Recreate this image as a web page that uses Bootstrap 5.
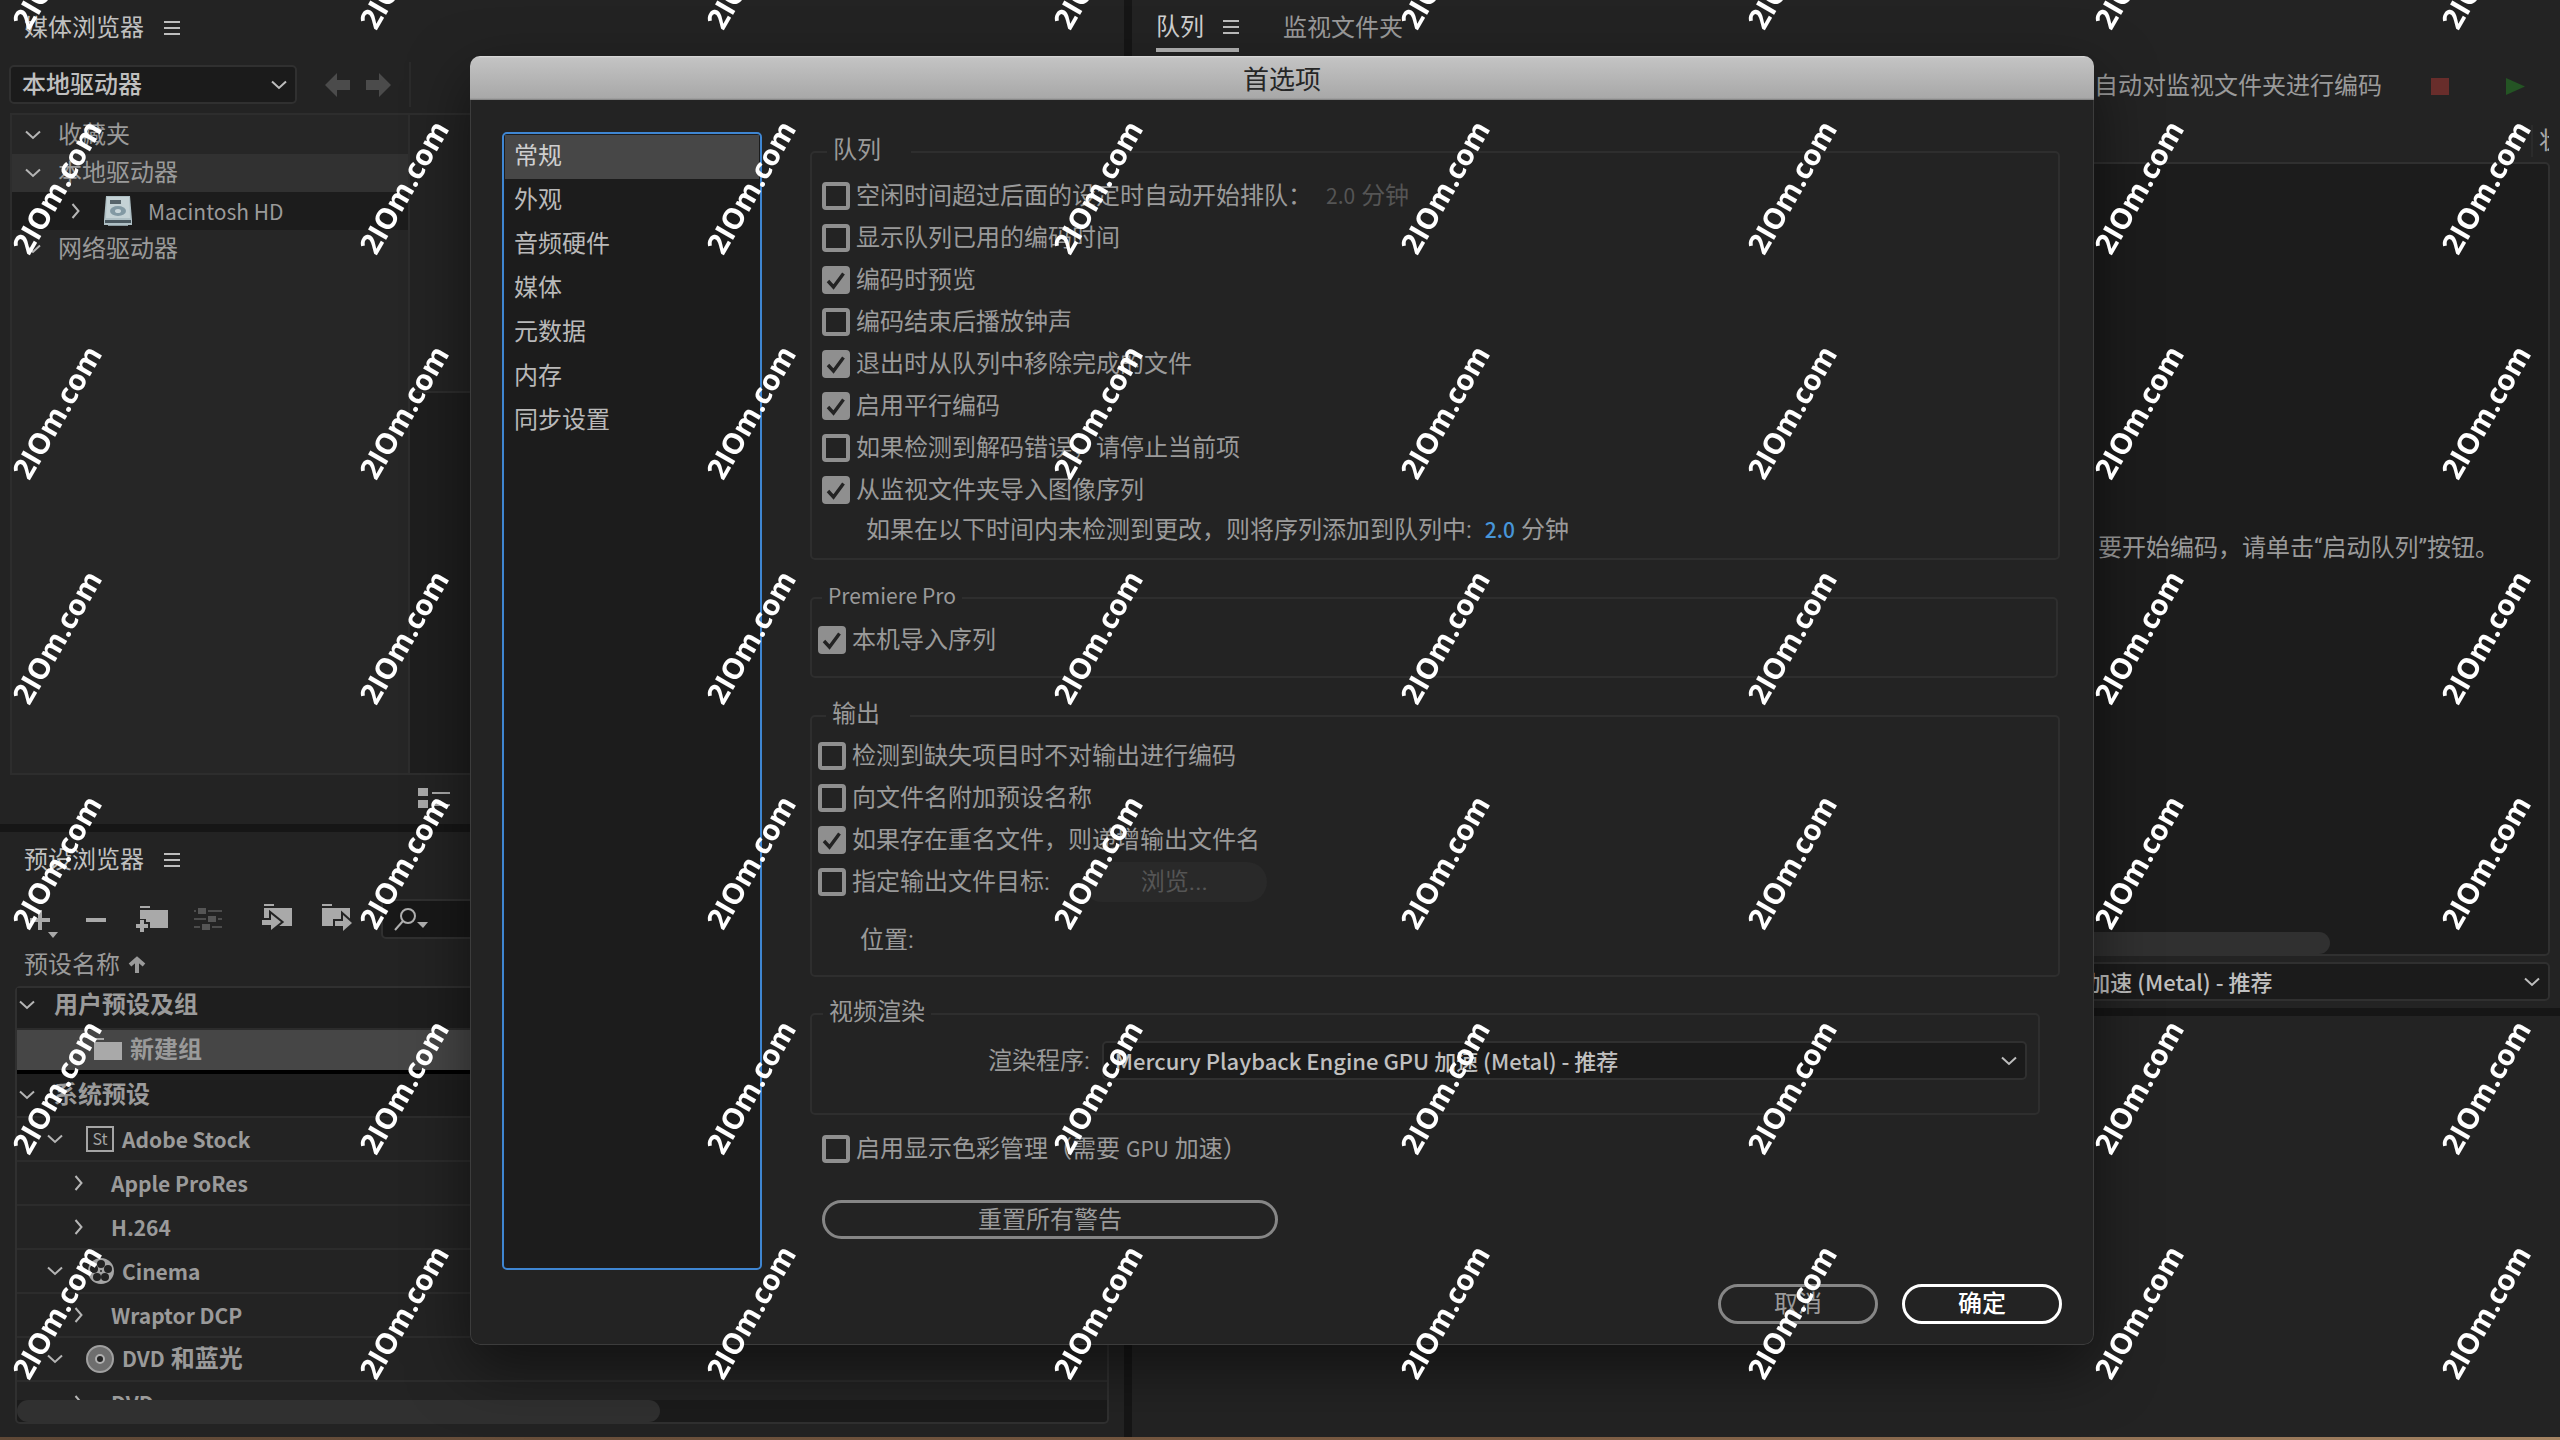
<!DOCTYPE html>
<html lang="zh-CN" data-bs-theme="dark">
<head>
<meta charset="utf-8">
<meta name="viewport" content="width=device-width, initial-scale=1">
<title>首选项</title>
<link rel="stylesheet" href="https://cdn.jsdelivr.net/npm/bootstrap@5.3.0/dist/css/bootstrap.min.css">
<style>
:root{--bg:#232323;--well:#1c1c1c;--line:#303030;--gap:#161616;--dim:#9a9a9a;--lit:#c0c0c0}
body{font:24px/32px Roboto,"Noto Sans CJK SC",sans-serif;background:linear-gradient(90deg,#5f4836,#7c5c43 60%,#a58463);color:var(--dim);height:100vh;overflow:hidden}
svg{display:block;flex:none}
.la{font-family:"Noto Sans CJK SC",sans-serif;font-size:21px;line-height:30px}
.workspace{display:grid;grid-template-columns:1124fr 1428fr;column-gap:8px;background:var(--gap);height:calc(100vh - 3px)}
.stack-col{display:grid;row-gap:8px;min-height:0;min-width:0}
.left-col{grid-template-rows:824fr 605fr}
.right-col{grid-template-rows:1008fr 421fr}
.pane{background:var(--bg);min-height:0;min-width:0;display:flex;flex-direction:column}
.pane-head{height:56px;padding:0 24px;display:flex;align-items:center;color:var(--lit);flex:none}
.plain{background:none;border:0;padding:0;color:inherit;font:inherit;line-height:32px}
.dark-select{font:inherit;font-weight:500;line-height:32px;color:var(--lit);background-color:#1b1b1b;border:2px solid var(--line);border-radius:5px;padding:1px 44px 1px 11px;height:39px;
 background-image:url("data:image/svg+xml,%3Csvg xmlns='http://www.w3.org/2000/svg' viewBox='0 0 16 10'%3E%3Cpath fill='none' stroke='%23bdbdbd' stroke-width='2' d='M1 1.5l7 6.5 7-6.5'/%3E%3C/svg%3E");background-size:16px 10px;background-position:right 8px center}
.engine-select{font-family:"Noto Sans CJK SC",sans-serif;font-size:22px;padding-top:0;padding-bottom:2px}
.drive-bar{height:57px;padding:6px 0 6px 9px}
.drive-bar .dark-select{width:288px}
.nav-arrows{width:114px;gap:16px;padding-right:18px;color:#4b4b4b;border-right:2px solid #2b2b2b;height:45px}
.drive-area{display:grid;grid-template-columns:398px 1fr;margin-left:10px;border:2px solid #2d2d2d;height:662px}
.drive-list{background:#262626;border-right:2px solid #2d2d2d}
.drive-list li{height:38px;padding-left:13px;display:flex;align-items:center}
.drive-list li:first-child{height:39px}
.drive-list svg.tw{margin-right:17px}
.drive-list .on{background:#313131}
.drive-list .kid{background:var(--well);padding-left:56px}
.drive-files{background:linear-gradient(#232323 276px,#2d2d2d 276px,#2d2d2d 278px,#1e1e1e 278px)}
.view-bar{padding:13px 0 0 418px}
.tool-row{height:40px;margin-top:11px;padding-left:29px;color:#a9a9a9}
.find-box{flex:1;margin-right:15px;height:40px;background:#181818;border:2px solid var(--line);border-radius:5px;position:relative}
.find-box input{background:none;border:0;width:100%;height:100%;padding-left:50px;color:var(--lit)}
.find-box svg{position:absolute;left:10px;top:6px}
.with-edge{stroke:var(--bg);stroke-width:4px;paint-order:stroke}
.sort-row{height:47px;padding:4px 24px 0}
.preset-box{flex:1;min-height:0;margin:0 15px 13px;border:2px solid var(--line);border-radius:5px;background:#1b1b1b;display:flex;flex-direction:column}
.preset-rows{flex:1;min-height:0;overflow:hidden;margin-right:24px;font-weight:600}
.preset-rows li{height:44px;border-bottom:2px solid #2c2c2c;background:var(--bg);display:flex;align-items:center;padding:0 0 1px 30px}
.preset-rows .root{padding-left:2px;background:#1e1e1e}
.preset-rows .first{height:42px;padding-bottom:6px}
.preset-rows .picked{background:#464646;border-bottom:4px solid #000;padding-left:77px}
.preset-rows .deep{padding-left:54px}
.preset-rows .deep svg{margin-right:24px}
.root>svg{margin-right:19px}
.branch>svg.tw{margin-right:23px}
.branch>svg+svg,.picked>svg{margin-right:8px}
.bar-track{height:22px;flex:none}
.bar-thumb{height:22px;border-radius:11px;background:#303030}
.active-tab{color:#d0d0d0;height:52px;border-bottom:4px solid #b5b5b5;padding-top:5px;display:flex;align-items:center;gap:19px;align-self:flex-start}
.other-tab{color:var(--dim);margin-left:44px}
.queue-bar{height:60px;padding-right:35px}
.queue-head{height:46px;padding-right:11px;padding-top:4px}
.clip-cell{width:18px;height:32px;overflow:hidden;border-left:2px solid #2b2b2b;padding-left:6px;color:#aaa}
.queue-well{background:var(--well);border:2px solid var(--line);border-radius:5px;margin:0 10px 0 8px;height:794px;display:flex;flex-direction:column}
.hint-line{margin-top:368px;padding-right:49px}
.render-bar{padding:6px 10px 0 0}
.render-bar .dark-select{width:56%}
.prefs{position:absolute;top:56px;left:18.36%;width:63.44%;background:var(--bg);border-radius:10px;box-shadow:0 22px 60px rgba(0,0,0,.5);overflow:hidden}
.prefs-shade{border:1px solid #3c3c3c;border-top:0;border-radius:0 0 10px 10px;padding:32px 31px 20px}
.prefs-title{height:44px;background:linear-gradient(#dcdcdc,#c3c3c3 2px,#a8a8a8 42px,#7d7d7d);color:#262626;font-size:26px;line-height:48px;font-weight:400;text-align:center;margin:0}
.page-list{width:260px;min-height:1138px;border:2px solid #3f86d2;border-radius:5px;background:var(--well);padding:1px;flex:none}
.page-list a{display:block;height:44px;padding:5px 9px;color:#b9b9b9;text-decoration:none}
.page-list a.on{background:#474747;color:#cfcfcf}
.page-body{margin:0 2px 0 48px;padding-top:2px}
.box{border:2px solid #2e2e2e;border-radius:5px;padding:5px 10px 5px}
.box legend{float:none;width:auto;font:inherit;line-height:32px;padding:0 6px 4px;margin:0}
.box .wide-legend{padding:0 30px 4px 6px;margin-left:5px}
.opt{height:42px;display:flex;align-items:center}
.opt .form-check-input{width:28px;height:28px;margin:0 6px 0 0;border:4px solid #8f8f8f;border-radius:4px;background-color:transparent;flex:none}
.opt .form-check-input:checked{background-color:#8f8f8f;background-origin:border-box;background-size:28px 28px;background-image:url("data:image/svg+xml,%3Csvg xmlns='http://www.w3.org/2000/svg' viewBox='0 0 28 28'%3E%3Cpath fill='none' stroke='%23232323' stroke-width='3.4' d='M6 15l5.5 6L21.5 7.500'/%3E%3C/svg%3E")}
.idle-time{color:#555;margin-left:14px}
.num-link{color:#4795d8;text-decoration:none;font-weight:500;margin:0 6px 0 13px}
.pill{font:inherit;line-height:32px;height:40px;border:3px solid #868686;border-radius:20px;background:transparent;color:var(--dim);padding:0;width:160px}
.pill-main{border-color:#fff;color:#fff;font-weight:500}
.pill-reset{width:456px;height:39px;margin:30px 0 0 12px}
.pill-off{border:0;background:#292929;width:185px;color:#555;margin-left:32px}
.stamp-layer{position:fixed;inset:0;overflow:hidden;pointer-events:none;z-index:5}
.stamp-grid{display:grid;grid-template-columns:repeat(8,347px);grid-auto-rows:225px;place-items:center;margin:-151px 0 0 -117px;width:max-content;color:#fff;font:700 29px/32px "Open Sans",sans-serif}
.stamp-grid span{transform:rotate(-60deg)}
</style>
<script src="https://cdn.jsdelivr.net/npm/bootstrap@5.3.0/dist/js/bootstrap.bundle.min.js"></script>
</head>
<body>
<svg width="0" height="0" class="position-absolute" aria-hidden="true">
  <symbol id="down" viewBox="0 0 16 16"><path d="M1 4.500l7 6.500 7-6.500" fill="none" stroke="#b5b5b5" stroke-width="2"/></symbol>
  <symbol id="side" viewBox="0 0 16 16"><path d="M4.500 1l6 7-6 7" fill="none" stroke="#b5b5b5" stroke-width="2"/></symbol>
  <symbol id="burger" viewBox="0 0 16 16"><path d="M0 2h16M0 8h16M0 14h16" stroke="#bdbdbd" stroke-width="2"/></symbol>
</svg>
<main class="workspace">
  <div class="stack-col left-col">
    <section class="pane">
      <div class="pane-head"><span>媒体浏览器</span><button class="plain ms-3 ps-1" aria-label="菜单"><svg width="16" height="16"><use href="#burger"/></svg></button></div>
      <div class="drive-bar d-flex align-items-center">
        <select class="form-select dark-select" aria-label="驱动器"><option>本地驱动器</option></select>
        <div class="nav-arrows d-flex align-items-center justify-content-end">
          <button class="plain" aria-label="后退"><svg width="25" height="24"><path d="M0 12L12 0v7h13v10H12v7z" fill="currentColor"/></svg></button>
          <button class="plain" aria-label="前进"><svg width="25" height="24"><path d="M25 12L13 0v7H0v10h13v7z" fill="currentColor"/></svg></button>
        </div>
      </div>
      <div class="drive-area">
        <ul class="drive-list list-unstyled m-0">
          <li><svg class="tw" width="16" height="16"><use href="#down"/></svg>收藏夹</li>
          <li class="on"><svg class="tw" width="16" height="16"><use href="#down"/></svg>本地驱动器</li>
          <li class="kid"><svg width="16" height="16"><use href="#side"/></svg>
            <svg class="mx-3 ps-1" width="32" height="32" viewBox="0 0 28 32"><path d="M2 1h24l2 24v5H0v-5z" fill="#aebfc4"/><path d="M3 2h22l1 21H2z" fill="#c4d2d5"/><path d="M6 5h11v4H6z" fill="#56646a"/><ellipse cx="14" cy="16" rx="8" ry="5" fill="#8299a3"/><ellipse cx="14" cy="16" rx="3" ry="2" fill="#c9d6da"/><path d="M1 25h26v3H1z" fill="#4b5960"/><path d="M4 30h20v1H4z" fill="#8b999e"/></svg><span class="la">Macintosh HD</span></li>
          <li><svg class="tw" width="16" height="16"><use href="#down"/></svg>网络驱动器</li>
        </ul>
        <div class="drive-files"></div>
      </div>
      <div class="view-bar"><button class="plain d-block" aria-label="列表视图"><svg width="32" height="20"><path d="M0 0h10v8H0zM0 12h10v8H0z" fill="#a9a9a9"/><path d="M14 5h18M14 17h18" stroke="#a9a9a9" stroke-width="2"/></svg></button></div>
    </section>
    <section class="pane">
      <div class="pane-head"><span>预设浏览器</span><button class="plain ms-3 ps-1" aria-label="菜单"><svg width="16" height="16"><use href="#burger"/></svg></button></div>
      <div class="tool-row d-flex align-items-center">
        <button class="plain" aria-label="新建预设"><svg width="57" height="40"><path d="M11 11v20M1 21h20" stroke="currentColor" stroke-width="4"/><path d="M19 33h10l-5 6z" fill="currentColor"/></svg></button>
        <button class="plain" aria-label="删除预设"><svg width="50" height="40"><path d="M0 21h20" stroke="currentColor" stroke-width="4"/></svg></button>
        <button class="plain" aria-label="新建组"><svg width="58" height="40"><path d="M4 7h10v2H4zM4 11h28v18H14v-6H10v-3H4z" fill="currentColor"/><path d="M6 21v12M0 27h12" stroke="currentColor" stroke-width="4"/></svg></button>
        <button class="plain" disabled aria-label="预设设置"><svg width="68" height="40"><path d="M0 12h2M14 12h14M0 20h12M24 20h4M0 28h6M18 28h10" stroke="#4c4c4c" stroke-width="2"/><path d="M4 9h8v6H4zM14 17h8v6h-8zM8 25h8v6H8z" fill="#555"/></svg></button>
        <button class="plain" aria-label="导入预设"><svg width="60" height="40"><path d="M2 5h10v2H2zM2 9h28v18H2z" fill="currentColor"/><path d="M0 21h9v-6l10 8-10 8v-5H0z" fill="currentColor" class="with-edge"/></svg></button>
        <button class="plain" aria-label="导出预设"><svg width="59" height="40"><path d="M0 5h10v2H0zM0 9h28v18H0z" fill="currentColor"/><path d="M13 22h8v-6l9 8-9 8v-5h-8z" fill="currentColor" class="with-edge"/></svg></button>
        <div class="find-box"><svg width="40" height="26"><circle cx="15" cy="9" r="7" fill="none" stroke="#b0b0b0" stroke-width="2"/><path d="M10 14L2 23" stroke="#b0b0b0" stroke-width="2"/><path d="M24 15h11l-5 6z" fill="#b0b0b0"/></svg><input type="text" aria-label="搜索预设"></div>
      </div>
      <div class="sort-row d-flex align-items-center">预设名称<svg class="ms-2" width="18" height="17"><path d="M9 17V3M2 9l7-6 7 6" fill="none" stroke="#9a9a9a" stroke-width="4"/></svg></div>
      <div class="preset-box">
        <ul class="preset-rows list-unstyled m-0">
          <li class="root first"><svg width="16" height="16"><use href="#down"/></svg>用户预设及组</li>
          <li class="picked"><svg width="28" height="24"><path d="M0 0h10v2H0zM0 4h28v18H0z" fill="#a9a9a9"/></svg>新建组</li>
          <li class="root"><svg width="16" height="16"><use href="#down"/></svg>系统预设</li>
          <li class="branch"><svg class="tw" width="16" height="16"><use href="#down"/></svg><svg width="28" height="26"><rect x="1" y="1" width="26" height="24" fill="none" stroke="#a5a5a5" stroke-width="2"/><text x="14" y="19" text-anchor="middle" font-family="Noto Sans CJK SC" font-size="16" font-weight="400" fill="#a5a5a5">St</text></svg><span class="la">Adobe Stock</span></li>
          <li class="deep"><svg width="16" height="16"><use href="#side"/></svg><span class="la">Apple ProRes</span></li>
          <li class="deep"><svg width="16" height="16"><use href="#side"/></svg><span class="la">H.264</span></li>
          <li class="branch"><svg class="tw" width="16" height="16"><use href="#down"/></svg><svg width="28" height="28"><circle cx="15" cy="14" r="13" fill="#a5a5a5"/><g fill="#232323"><circle cx="15" cy="7" r="4"/><circle cx="22" cy="12" r="4"/><circle cx="19" cy="20" r="4"/><circle cx="11" cy="20" r="4"/><circle cx="8" cy="12" r="4"/><circle cx="15" cy="14" r="1"/></g></svg><span class="la">Cinema</span></li>
          <li class="deep"><svg width="16" height="16"><use href="#side"/></svg><span class="la">Wraptor DCP</span></li>
          <li class="branch"><svg class="tw" width="16" height="16"><use href="#down"/></svg><svg width="28" height="28"><circle cx="14" cy="14" r="13" fill="#6e6e6e" stroke="#a0a0a0" stroke-width="2"/><circle cx="14" cy="14" r="4" fill="#232323" stroke="#b0b0b0" stroke-width="2"/></svg><span><span class="la">DVD</span> 和蓝光</span></li>
          <li class="deep"><svg width="16" height="16"><use href="#side"/></svg><span class="la">DVD</span></li>
        </ul>
        <div class="bar-track"><div class="bar-thumb" style="width:59%"></div></div>
      </div>
    </section>
  </div>
  <div class="stack-col right-col">
    <section class="pane">
      <div class="pane-head ps-4">
        <div class="active-tab"><span>队列</span><button class="plain" aria-label="菜单"><svg width="16" height="16"><use href="#burger"/></svg></button></div>
        <button class="plain other-tab">监视文件夹</button>
      </div>
      <div class="queue-bar d-flex align-items-center justify-content-end">
        <span>自动对监视文件夹进行编码</span>
        <button class="plain ms-5" aria-label="停止队列"><svg width="19" height="17"><path d="M1 0h18v17H1z" fill="#682d2b"/></svg></button>
        <button class="plain ms-5 ps-2" aria-label="启动队列"><svg width="20" height="17"><path d="M1 0l19 8.500L1 17z" fill="#245424"/></svg></button>
      </div>
      <div class="queue-head d-flex align-items-center justify-content-end"><div class="clip-cell">状</div></div>
      <div class="queue-well">
        <div class="hint-line text-end">要开始编码，请单击“启动队列”按钮。</div>
        <div class="bar-track mt-auto"><div class="bar-thumb" style="width:84.5%"></div></div>
      </div>
      <div class="render-bar d-flex justify-content-end">
        <select class="form-select dark-select engine-select" aria-label="渲染程序"><option>Mercury Playback Engine GPU 加速 (Metal) - 推荐</option></select>
      </div>
    </section>
    <section class="pane"></section>
  </div>
</main>

<section class="prefs" role="dialog" aria-labelledby="prefs-title">
  <h1 class="prefs-title" id="prefs-title">首选项</h1>
  <div class="prefs-shade">
    <div class="d-flex">
      <nav class="page-list">
        <a class="on" href="#">常规</a><a href="#">外观</a><a href="#">音频硬件</a><a href="#">媒体</a><a href="#">元数据</a><a href="#">内存</a><a href="#">同步设置</a>
      </nav>
      <form class="page-body flex-grow-1">
        <fieldset class="box">
          <legend class="wide-legend">队列</legend>
          <div class="opt"><input class="form-check-input" type="checkbox" id="o1"><label for="o1">空闲时间超过后面的设定时自动开始排队：</label><span class="idle-time"><span class="la">2.0</span> 分钟</span></div>
          <div class="opt"><input class="form-check-input" type="checkbox" id="o2"><label for="o2">显示队列已用的编码时间</label></div>
          <div class="opt"><input class="form-check-input" type="checkbox" id="o3" checked><label for="o3">编码时预览</label></div>
          <div class="opt"><input class="form-check-input" type="checkbox" id="o4"><label for="o4">编码结束后播放钟声</label></div>
          <div class="opt"><input class="form-check-input" type="checkbox" id="o5" checked><label for="o5">退出时从队列中移除完成的文件</label></div>
          <div class="opt"><input class="form-check-input" type="checkbox" id="o6" checked><label for="o6">启用平行编码</label></div>
          <div class="opt"><input class="form-check-input" type="checkbox" id="o7"><label for="o7">如果检测到解码错误，请停止当前项</label></div>
          <div class="opt"><input class="form-check-input" type="checkbox" id="o8" checked><label for="o8">从监视文件夹导入图像序列</label></div>
          <div style="padding:3px 0 7px 44px">如果在以下时间内未检测到更改，则将序列添加到队列中:<a class="num-link la" href="#">2.0</a>分钟</div>
        </fieldset>
        <fieldset class="box" style="margin:20px 2px 0 0;padding:3px 6px 15px">
          <legend class="ms-1"><span class="la">Premiere Pro</span></legend>
          <div class="opt"><input class="form-check-input" type="checkbox" id="o9" checked><label for="o9">本机导入序列</label></div>
        </fieldset>
        <fieldset class="box" style="margin-top:20px;padding:1px 6px 14px">
          <legend class="wide-legend ms-2">输出</legend>
          <div class="opt"><input class="form-check-input" type="checkbox" id="o10"><label for="o10">检测到缺失项目时不对输出进行编码</label></div>
          <div class="opt"><input class="form-check-input" type="checkbox" id="o11"><label for="o11">向文件名附加预设名称</label></div>
          <div class="opt"><input class="form-check-input" type="checkbox" id="o12" checked><label for="o12">如果存在重名文件，则递增输出文件名</label></div>
          <div class="opt"><input class="form-check-input" type="checkbox" id="o13"><label for="o13">指定输出文件目标:</label><button type="button" class="pill pill-off" disabled>浏览...</button></div>
          <div class="opt mt-3" style="padding-left:42px">位置:</div>
        </fieldset>
        <fieldset class="box" style="margin:19px 20px 0 0;padding:9px 11px 33px">
          <legend>视频渲染</legend>
          <div class="d-flex align-items-center" style="padding-left:165px"><label class="text-nowrap" for="renderer" style="margin-right:12px">渲染程序:</label>
          <select id="renderer" class="form-select dark-select engine-select"><option>Mercury Playback Engine GPU 加速 (Metal) - 推荐</option></select></div>
        </fieldset>
        <div class="opt" style="margin:13px 0 0 12px"><input class="form-check-input" type="checkbox" id="o14"><label for="o14">启用显示色彩管理（需要 <span class="la">GPU</span> 加速）</label></div>
        <button type="button" class="pill pill-reset">重置所有警告</button>
      </form>
    </div>
    <div class="d-flex justify-content-end gap-4" style="margin-top:14px">
      <button class="pill">取消</button><button class="pill pill-main">确定</button>
    </div>
  </div>
</section>

<div class="stamp-layer" aria-hidden="true"><div class="stamp-grid" id="stamps"></div></div>
<script>
document.getElementById('stamps').innerHTML = '<span>2IOm.com</span>'.repeat(56);
</script>
</body>
</html>
